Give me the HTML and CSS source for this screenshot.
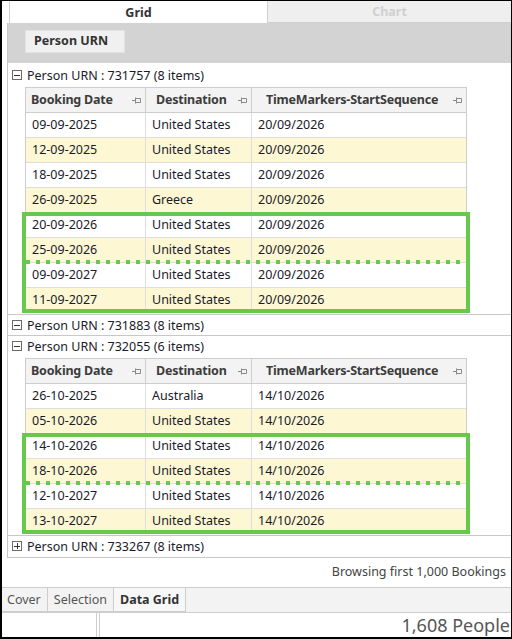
FILE: index.html
```html
<!DOCTYPE html>
<html>
<head>
<meta charset="utf-8">
<link rel="stylesheet" href="styles.css">
</head>
<body>
<div class="frame">
  <div class="top-tabs">
    <div class="top-tab active">Grid</div>
    <div class="top-tab">Chart</div>
  </div>

  <div class="panel">
    <div class="toolbar">
      <div class="group-chip">Person URN</div>
    </div>

    <div class="grid-body">
      <!-- group 1 -->
      <div class="group">
        <div class="group-head"><span class="toggle minus"></span>Person URN : 731757 (8 items)</div>
        <div class="table">
          <div class="row head">
            <div class="hcell c1"><span class="htext">Booking Date</span><svg class="pin" width="9" height="7" viewBox="0 0 9 7"><path d="M0 3.5H3.5M3.5 0.5V6.5M3.5 1.5H8.5V5.5H3.5" fill="none" stroke="#8a8a8a" stroke-width="1"/></svg></div>
            <div class="hcell c2"><span class="htext">Destination</span><svg class="pin" width="9" height="7" viewBox="0 0 9 7"><path d="M0 3.5H3.5M3.5 0.5V6.5M3.5 1.5H8.5V5.5H3.5" fill="none" stroke="#8a8a8a" stroke-width="1"/></svg></div>
            <div class="hcell c3"><span class="htext">TimeMarkers-StartSequence</span><svg class="pin" width="9" height="7" viewBox="0 0 9 7"><path d="M0 3.5H3.5M3.5 0.5V6.5M3.5 1.5H8.5V5.5H3.5" fill="none" stroke="#8a8a8a" stroke-width="1"/></svg></div>
          </div>
          <div class="row"><div class="cell">09-09-2025</div><div class="cell">United States</div><div class="cell">20/09/2026</div></div>
          <div class="row alt"><div class="cell">12-09-2025</div><div class="cell">United States</div><div class="cell">20/09/2026</div></div>
          <div class="row"><div class="cell">18-09-2025</div><div class="cell">United States</div><div class="cell">20/09/2026</div></div>
          <div class="row alt"><div class="cell">26-09-2025</div><div class="cell">Greece</div><div class="cell">20/09/2026</div></div>
          <div class="row"><div class="cell">20-09-2026</div><div class="cell">United States</div><div class="cell">20/09/2026</div></div>
          <div class="row alt"><div class="cell">25-09-2026</div><div class="cell">United States</div><div class="cell">20/09/2026</div></div>
          <div class="row"><div class="cell">09-09-2027</div><div class="cell">United States</div><div class="cell">20/09/2026</div></div>
          <div class="row alt last"><div class="cell">11-09-2027</div><div class="cell">United States</div><div class="cell">20/09/2026</div></div>
          <div class="highlight hl-g1"><div class="split"></div></div>
        </div>
      </div>

      <!-- group 2 (header only) -->
      <div class="group">
        <div class="group-head"><span class="toggle minus"></span>Person URN : 731883 (8 items)</div>
      </div>

      <!-- group 3 -->
      <div class="group">
        <div class="group-head"><span class="toggle minus"></span>Person URN : 732055 (6 items)</div>
        <div class="table">
          <div class="row head">
            <div class="hcell c1"><span class="htext">Booking Date</span><svg class="pin" width="9" height="7" viewBox="0 0 9 7"><path d="M0 3.5H3.5M3.5 0.5V6.5M3.5 1.5H8.5V5.5H3.5" fill="none" stroke="#8a8a8a" stroke-width="1"/></svg></div>
            <div class="hcell c2"><span class="htext">Destination</span><svg class="pin" width="9" height="7" viewBox="0 0 9 7"><path d="M0 3.5H3.5M3.5 0.5V6.5M3.5 1.5H8.5V5.5H3.5" fill="none" stroke="#8a8a8a" stroke-width="1"/></svg></div>
            <div class="hcell c3"><span class="htext">TimeMarkers-StartSequence</span><svg class="pin" width="9" height="7" viewBox="0 0 9 7"><path d="M0 3.5H3.5M3.5 0.5V6.5M3.5 1.5H8.5V5.5H3.5" fill="none" stroke="#8a8a8a" stroke-width="1"/></svg></div>
          </div>
          <div class="row"><div class="cell">26-10-2025</div><div class="cell">Australia</div><div class="cell">14/10/2026</div></div>
          <div class="row alt"><div class="cell">05-10-2026</div><div class="cell">United States</div><div class="cell">14/10/2026</div></div>
          <div class="row"><div class="cell">14-10-2026</div><div class="cell">United States</div><div class="cell">14/10/2026</div></div>
          <div class="row alt"><div class="cell">18-10-2026</div><div class="cell">United States</div><div class="cell">14/10/2026</div></div>
          <div class="row"><div class="cell">12-10-2027</div><div class="cell">United States</div><div class="cell">14/10/2026</div></div>
          <div class="row alt last"><div class="cell">13-10-2027</div><div class="cell">United States</div><div class="cell">14/10/2026</div></div>
          <div class="highlight hl-g3"><div class="split"></div></div>
        </div>
      </div>

      <!-- group 4 (collapsed) -->
      <div class="group no-rule">
        <div class="group-head"><span class="toggle plus"></span>Person URN : 733267 (8 items)</div>
      </div>
    </div>
  </div>

  <div class="browse-note">Browsing first 1,000 Bookings</div>

  <div class="bottom-tabs">
    <div class="bottom-tab">Cover</div>
    <div class="bottom-tab">Selection</div>
    <div class="bottom-tab active">Data Grid</div>
  </div>

  <div class="status-bar">
    <div class="status-cell first"></div>
    <div class="status-cell count"><span class="count-text">1,608 People</span></div>
  </div>
</div>
</body>
</html>
```

FILE: styles.css
```css
* {
  box-sizing: border-box;
}

html, body {
  margin: 0;
  padding: 0;
  width: 512px;
  height: 639px;
  overflow: hidden;
  background: #fff;
}

body {
  font-family: "Noto Sans", "Open Sans", sans-serif;
  font-size: 12.5px;
  color: #1a1a2a;
}

.frame {
  width: 512px;
  height: 639px;
  border-top: 1px solid #000;
  border-left: 2px solid #000;
  border-right: 1px solid #000;
  border-bottom: 2px solid #000;
  display: flex;
  flex-direction: column;
  overflow: hidden;
}

/* ---------- top tab strip ---------- */
.top-tabs {
  height: 22px;
  display: flex;
  padding-left: 7px;
  flex: none;
}

.top-tab {
  flex: 1;
  display: flex;
  align-items: center;
  justify-content: center;
  font-weight: 700;
  font-size: 12.5px;
}

.top-tab.active {
  color: #333;
  background: #fff;
  border-left: 1px solid #cfcfcf;
  border-right: 1px solid #cfcfcf;
  flex: 0 0 259px;
}

.top-tab:not(.active) {
  color: #d0d0d0;
  background: #efefef;
  border-bottom: 1px solid #cfcfcf;
}

/* ---------- main panel ---------- */
.panel {
  flex: 1;
  margin-left: 5px;
  border-left: 1px solid #c8c8c8;
  display: flex;
  flex-direction: column;
  min-height: 0;
}

.toolbar {
  height: 40px;
  flex: none;
  background: #d3d3d3;
  padding: 7px 0 0 17px;
}

.group-chip {
  width: 100px;
  height: 23px;
  background: #f0f0f0;
  border: 1px solid #e2e2e2;
  font-weight: 700;
  color: #333;
  font-size: 12.5px;
  line-height: 20px;
  padding-left: 8px;
}

.grid-body {
  flex: 1;
  padding-top: 2px;
  border-bottom: 1px solid #c8c8c8;
}

.group {
  border-bottom: 1px solid #c8c8c8;
}

.group.no-rule {
  border-bottom: none;
}

.group-head {
  height: 20px;
  display: flex;
  align-items: center;
  padding-left: 4px;
  color: #1a1a2a;
}

.toggle {
  width: 10px;
  height: 10px;
  border: 1px solid #6b6b6b;
  margin-right: 5px;
  position: relative;
  flex: none;
}

.toggle::before {
  content: "";
  position: absolute;
  left: 1px;
  right: 1px;
  top: 3.5px;
  height: 1px;
  background: #333;
}

.toggle.plus::after {
  content: "";
  position: absolute;
  top: 1px;
  bottom: 1px;
  left: 3.5px;
  width: 1px;
  background: #333;
}

/* ---------- data table ---------- */
.table {
  position: relative;
  margin: 2px 0 1px 17px;
  width: 442px;
  border: 1px solid #cdcdcd;
  border-bottom: none;
}

.row {
  display: grid;
  grid-template-columns: 120px 106px 1fr;
  height: 25px;
  border-bottom: 1px solid #dedede;
  background: #fff;
}

.row.alt {
  background: #fdf8d3;
}

.row.head {
  background: #f3f3f3;
  border-bottom: 1px solid #cdcdcd;
}

.cell {
  padding-left: 6px;
  line-height: 23px;
  white-space: nowrap;
  border-right: 1px solid #dedede;
  color: #1a1a2a;
}

.cell:last-child {
  border-right: none;
}

.hcell {
  display: flex;
  align-items: center;
  border-right: 1px solid #cdcdcd;
  font-weight: 700;
  color: #3c3c3c;
  padding-right: 4px;
  letter-spacing: -0.2px;
}

.hcell:last-child {
  border-right: none;
}

.hcell.c1 { padding-left: 5px; }
.hcell.c2 { padding-left: 10px; }
.hcell.c3 { padding-left: 14px; }

.htext {
  flex: 1;
  white-space: nowrap;
  line-height: 23px;
  align-self: flex-start;
}

.pin {
  flex: none;
  display: block;
}

/* highlighted block of rows with a dotted split between years */
.highlight {
  position: absolute;
  left: -4px;
  right: -4px;
  height: 101px;
  border: 4px solid #66c84c;
  pointer-events: none;
}

.hl-g1 { top: 124px; }
.hl-g3 { top: 74px; }

.split {
  position: absolute;
  left: 0;
  right: 0;
  top: 44px;
  height: 4px;
  background: repeating-linear-gradient(90deg, #66c84c 0 4px, transparent 4px 10px);
}

/* ---------- footer area ---------- */
.browse-note {
  height: 29px;
  flex: none;
  text-align: right;
  padding-right: 5px;
  line-height: 28px;
  color: #444;
}

.bottom-tabs {
  height: 25px;
  flex: none;
  display: flex;
  background: #f3f3f3;
  border-top: 1px solid #cdcdcd;
}

.bottom-tab {
  padding: 0 6px;
  line-height: 23px;
  font-size: 12.5px;
  color: #555;
  border-right: 1px solid #cdcdcd;
  border-bottom: 1px solid #cdcdcd;
}

.bottom-tab:first-child {
  padding-left: 5px;
}

.bottom-tab.active {
  font-weight: 700;
  color: #333;
  background: #f7f7f7;
}

.status-bar {
  height: 25px;
  flex: none;
  display: flex;
  border-top: 1px solid #cdcdcd;
  overflow: hidden;
}

.status-cell.first {
  width: 95px;
  border-right: 1px solid #cdcdcd;
}

.status-cell.count {
  flex: 1;
  margin-left: 2px;
  border-left: 1px solid #cdcdcd;
  display: flex;
  justify-content: flex-end;
  overflow: hidden;
  padding-right: 1px;
}

.count-text {
  font-size: 18px;
  line-height: 24px;
  color: #555;
  white-space: nowrap;
}
```
